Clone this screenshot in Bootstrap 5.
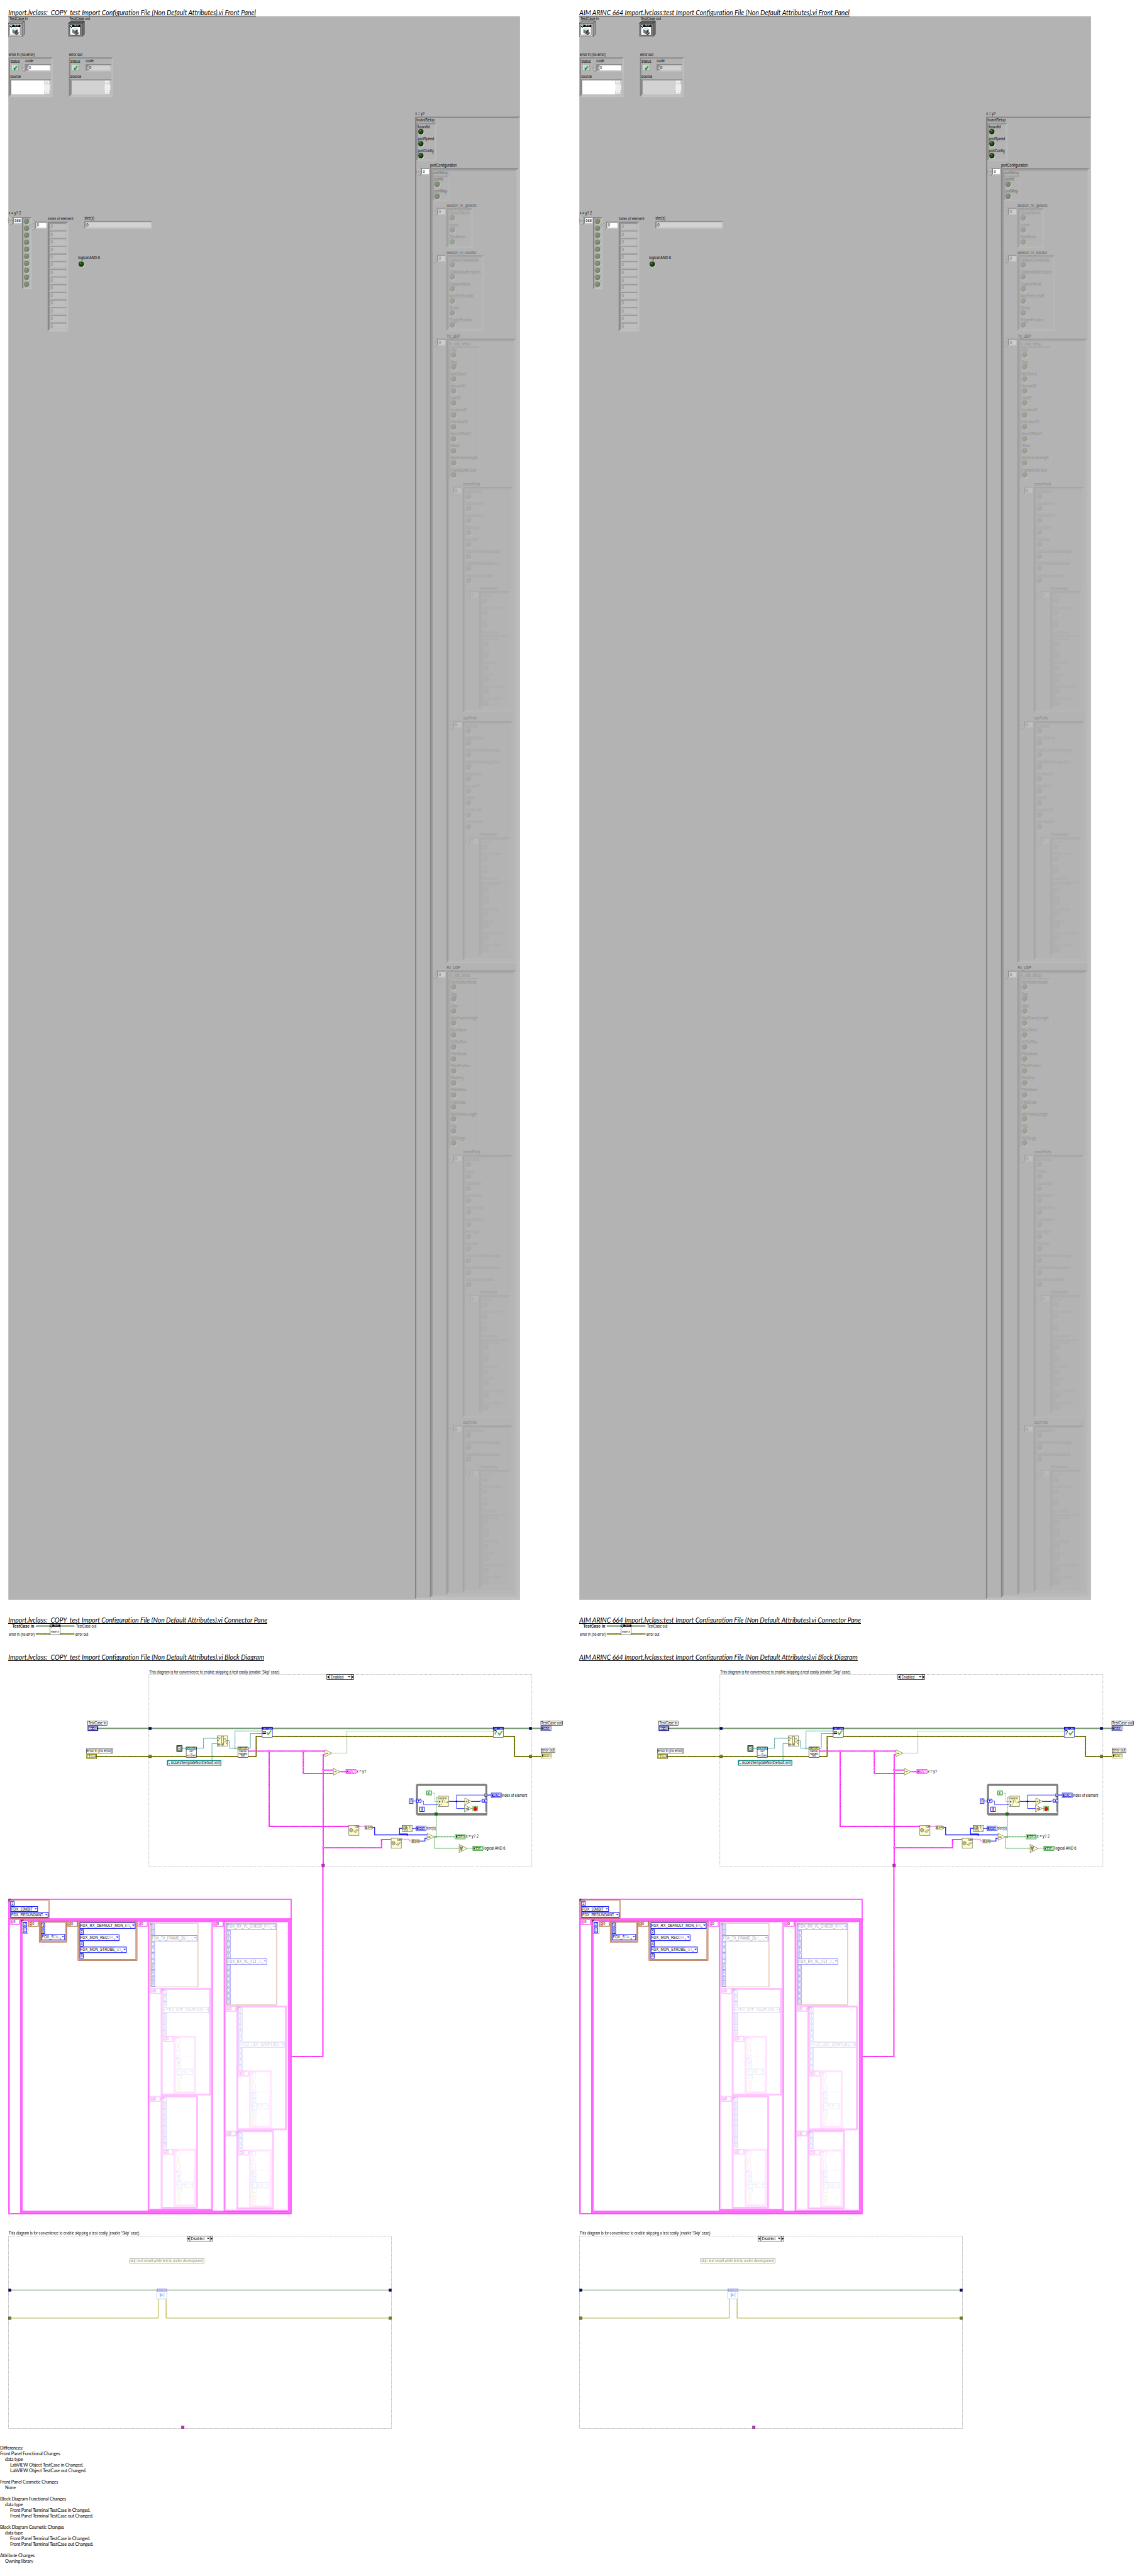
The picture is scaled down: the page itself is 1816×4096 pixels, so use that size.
<!DOCTYPE html>
<html lang="en">
<head>
<meta charset="utf-8">
<title>VI comparison report</title>
<link href="https://cdn.jsdelivr.net/npm/bootstrap@5.3.0/dist/css/bootstrap.min.css" rel="stylesheet">
<style>
body{background:#fff;color:#000;width:1816px;overflow-x:hidden}
.vi-title{margin:0;padding-left:13.3px;display:flex;align-items:flex-end;font:italic 400 10.5px/11px Lato,"Open Sans",sans-serif;white-space:pre}
.vi-title span{border-bottom:1.3px solid #000;height:11px;line-height:10px;display:block;overflow:visible}
.t-front{height:25.6px;margin-bottom:.4px}
.t-conn{height:38.3px;margin-bottom:.4px}
.t-diag{height:27.7px;margin-bottom:.4px}
.canvas{display:block;width:908px;overflow:visible}
.canvas text{font-family:"Liberation Sans",Arial,sans-serif;font-size:13.4px;white-space:pre}
.diffs{font:400 7.4px/9.01px Lato,"Open Sans",sans-serif;letter-spacing:-.23px;padding-top:18.4px}
.diffs ul{list-style:none;margin:0;padding:0}
.diffs li ul{padding-left:8px}
.diffs .grp{margin-bottom:9.01px}
</style>
</head>
<body>
<main class="container-fluid p-0">
 <div class="row g-0">
  <section class="col-6" data-vi="Import.lvclass:  COPY  test Import Configuration File (Non Default Attributes).vi" data-w="741,775.5,766"></section>
  <section class="col-6" data-vi="AIM ARINC 664 Import.lvclass:test Import Configuration File (Non Default Attributes).vi" data-w="808.5,843,833"></section>
 </div>
 <div class="diffs">
  <div>Differences:</div>
  <ul>
   <li class="grp">Front Panel Functional Changes<ul><li>data type<ul><li>LabVIEW Object TestCase in Changed.</li><li>LabVIEW Object TestCase out Changed.</li></ul></li></ul></li>
   <li class="grp">Front Panel Cosmetic Changes<ul><li>None</li></ul></li>
   <li class="grp">Block Diagram Functional Changes<ul><li>data type<ul><li>Front Panel Terminal TestCase in Changed.</li><li>Front Panel Terminal TestCase out Changed.</li></ul></li></ul></li>
   <li class="grp">Block Diagram Cosmetic Changes<ul><li>data type<ul><li>Front Panel Terminal TestCase in Changed.</li><li>Front Panel Terminal TestCase out Changed.</li></ul></li></ul></li>
   <li>Attribute Changes<ul><li>Owning library</li></ul></li>
  </ul>
 </div>
</main>
<script src="https://cdn.jsdelivr.net/npm/bootstrap@5.3.0/dist/js/bootstrap.bundle.min.js"></script>
<script>
const K = 908 / 1713;
let out = '';
const esc = s => s.replace(/&/g, '&amp;').replace(/</g, '&lt;');
const add = s => { out += s; };
const R = (x1, y1, x2, y2, fill, stroke, sw, extra) => add(`<rect x="${x1}" y="${y1}" width="${x2 - x1}" height="${y2 - y1}" fill="${fill || 'none'}"${stroke ? ` stroke="${stroke}" stroke-width="${sw || 1}"` : ''} ${extra || ''}/>`);
// framed rectangle whose stroke stays inside its bounds
const F = (x1, y1, x2, y2, fill, stroke, sw, extra) => R(x1 + sw / 2, y1 + sw / 2, x2 - sw / 2, y2 - sw / 2, fill, stroke, sw, extra);
const T = (x, y, s, w, extra) => add(`<text x="${x}" y="${y}"${w ? ` textLength="${w}" lengthAdjust="spacingAndGlyphs"` : ''} ${extra || ''}>${esc(s)}</text>`);
const P = (pts, fill, stroke, sw, extra) => add(`<polygon points="${pts}" fill="${fill || 'none'}"${stroke ? ` stroke="${stroke}" stroke-width="${sw || 1}"` : ''} ${extra || ''}/>`);
const L = (pts, stroke, sw, extra) => add(`<polyline points="${pts}" fill="none" stroke="${stroke}" stroke-width="${sw}" ${extra || ''}/>`);
const svg = (y, h) => { const r = `<svg class="canvas" viewBox="0 ${y} 1713 ${h}" style="height:${(h * K).toFixed(2)}px">${out}</svg>`; out = ''; return r; };

/* ---------- front panel parts ---------- */
const OP = [1, .45, .2, .085, .045];
function bevel(x1, y1, x2, y2, op, fill, b) {
  b = b || 4; op = op === undefined ? 1 : op;
  if (fill) R(x1, y1, x2, y2, fill);
  add(`<g opacity="${op}">`);
  P(`${x1},${y1} ${x2},${y1} ${x2 - b},${y1 + b} ${x1 + b},${y1 + b}`, '#8a8a8a');
  P(`${x1},${y1} ${x1 + b},${y1 + b} ${x1 + b},${y2 - b} ${x1},${y2}`, '#868686');
  P(`${x1},${y2} ${x1 + b},${y2 - b} ${x2 - b},${y2 - b} ${x2},${y2}`, '#c1c1c1');
  P(`${x2},${y1} ${x2},${y2} ${x2 - b},${y2 - b} ${x2 - b},${y1 + b}`, '#bfbfbf');
  add('</g>');
}
function led(cx, cy, lv) {
  const c = ['#23500f', '#7c8c70', '#9aa294', '#a8aca5', '#aeb0ac'][lv], d = ['#0d2a02', '#71836a', '#959c90', '#a5a9a3', '#acaeab'][lv];
  const o = [1, .7, .4, .18, .08][lv];
  add(`<circle cx="${cx + 1.3}" cy="${cy + 1.3}" r="8.4" fill="#f4f4f4" opacity="${o * .75}"/><circle cx="${cx - .7}" cy="${cy - .7}" r="8.8" fill="#8f8f8f" opacity="${o * .7}"/><circle cx="${cx}" cy="${cy}" r="7.7" fill="${d}"/><circle cx="${cx - 1}" cy="${cy - 1.2}" r="5.8" fill="${c}"/><circle cx="${cx - 2.5}" cy="${cy - 3}" r="1.6" fill="#c8d8b8" opacity="${o * .6}"/>`);
}
function spin(cx, cy, op, rx, ry) {
  rx = rx || 6.8; ry = ry || 13.6;
  add(`<g opacity="${op}"><ellipse cx="${cx + .6}" cy="${cy + .6}" rx="${rx}" ry="${ry}" fill="#606060"/><ellipse cx="${cx}" cy="${cy}" rx="${rx}" ry="${ry}" fill="#c6c6c6" stroke="#8a8a8a"/><path d="M${cx - rx} ${cy}H${cx + rx}" stroke="#777"/><path d="M${cx - 2.6} ${cy - 3.5}L${cx} ${cy - 9}L${cx + 2.6} ${cy - 3.5}ZM${cx - 2.6} ${cy + 3.5}L${cx} ${cy + 9}L${cx + 2.6} ${cy + 3.5}Z" fill="#e8e8e8" stroke="#666" stroke-width=".9"/></g>`);
}
function arrIndex(cx, cy, lv) {
  spin(cx, cy, [1, .62, .3, .14][lv]);
  bevel(cx + 6, cy - 10.5, cx + 34, cy + 11, [1, .6, .3, .15][lv], null, 3.5);
  R(cx + 9.5, cy - 7, cx + 30, cy + 8, ['#fff', '#cecece', '#bfbfbf', '#b9b9b9'][lv]);
  T(cx + 12, cy + 5, '0', 6, `opacity="${[1, .5, .3, .16][lv]}"`);
}
function items(x, base, list, lv) {
  list.forEach((it, i) => { T(x, base + 36 * i, it[0], it[1], `opacity="${OP[lv]}"`); led(x + 9.3, base + 11 + 36 * i, lv); });
}
const D = { name: 26, 'default value': 60, unit: 16, partitionID: 48, UdpSrcPort: 54, UdpDstPort: 54, PortType: 42, SubVlId: 37, UdpNumBufMessages: 105, UdpMaxMessageSize: 102, UdpSamplingRate: 85, domainID: 45, sideID: 30, locationID: 48, interfaceID: 52 };
const N = s => s.split(',').map(n => [n, D[n]]);
function parameters(b) {
  T(1438.5, b, 'Parameters', 52, `opacity="${OP[3] + .03}"`);
  arrIndex(1403.5, b + 14, 3);
  bevel(1438, b + 4, 1531, b + 359, .18); bevel(1442, b + 8, 1527, b + 355, .08);
  items(1446, b + 22.5, N('name,default value,unit'), 4);
  T(1446.5, b + 132, 'Parameter', 48, `opacity="${OP[4]}"`);
  bevel(1446, b + 137, 1523, b + 353, .1);
  items(1450, b + 151, [['start index', 47], ['size', 18], ['encoding', 43], ['signed', 30], ['scale multiplier', 68], ['scale offset', 53]], 4);
}
function ports(title, w, b, list, bottom) {
  T(1389, b, title, w, 'opacity=".26"');
  arrIndex(1354, b + 14, 2);
  bevel(1388, b + 4, 1539, bottom, .33); bevel(1392, b + 8, 1535, bottom - 4, .14);
  items(1397, b + 23, list, 3);
  parameters(b + 23 + 11 + 36 * (list.length - 1) + 27);
}
function objIcon(x, dark) {
  P(`${x},70 ${x + 8},62.5 ${x + 48},62.5 ${x + 41},70`, dark ? '#5c5c5c' : '#a2a2a2', '#111', 1);
  P(`${x + 41},70 ${x + 48},62.5 ${x + 48},103 ${x + 41},109.5`, dark ? '#6c6c6c' : '#9c9c9c', '#111', 1);
  F(x, 70, x + 41, 109.5, dark ? '#8c8c8c' : '#ececec', '#444', 1);
  F(x + 4, 74, x + 36, 106, '#fff', '#000', 1);
  R(x + 4, 74, x + 36, 81, '#000');
  T(x + 16, 80, 'TEST', 17, 'style="font-size:7px" fill="#fff"');
  R(x + 5, 75, x + 12, 77, '#bff'); R(x + 7.5, 77, x + 10, 81, '#bff'); R(x + 8, 81, x + 10, 84, '#00a');
  P(`${x + 20},104 ${x + 30},97 ${x + 33},98 ${x + 26},104`, '#333');
  P(`${x + 12},88 ${x + 20},92 ${x + 20},103 ${x + 12},98`, '#777');
  P(`${x + 28},88 ${x + 20},92 ${x + 20},103 ${x + 28},98`, '#444');
  P(`${x + 12},88 ${x + 20},84 ${x + 28},88 ${x + 20},92`, '#bff', '#688', .6);
}
function errCluster(x, ind) {
  bevel(x, 172, x + 132, 291, 1);
  T(x + 5, 188.5, 'status', 28.5); T(x + 50, 187.5, 'code', 24);
  R(x + 10, 194, x + 29.5, 212.5, '#8a8a8a'); R(x + 10, 194, x + 28, 211.3, '#e6e6e6'); R(x + 12, 196, x + 27.5, 211, '#cfcfcf');
  L(`${x + 15.5},204 ${x + 18},208 ${x + 24.5},198.5`, '#063', 3.6); L(`${x + 15.5},204 ${x + 18},207.5 ${x + 24.5},198.5`, '#0f2', 1.8);
  bevel(x + 50, 192.5, x + 128, 214.5, 1, null, 3.5);
  R(x + 53, 195.5, x + 60, 211, '#8e8e8e'); R(x + 60, 195.5, x + 124, 211, ind ? '#d2d2d2' : '#fff');
  T(x + 54.5, 207, 'd', 5, 'fill="#fff" style="font-size:9px"'); T(x + 61, 208, '0', 6.2);
  if (!ind) spin(x + 45, 203, 1, 5.5, 11.5);
  T(x + 4.5, 233, 'source', 32);
  bevel(x + 4, 238, x + 128, 286.5, 1, null, 3.5);
  R(x + 8, 241, x + 124, 283, ind ? '#d2d2d2' : '#fff');
  R(x + 107, 241, x + 123.5, 283, '#efefef');
  [[242, 'M-2 1.5L0-1.5L2 1.5Z'], [272, 'M-2-1.5L0 1.5L2-1.5Z']].forEach(([y, d]) => {
    R(x + 107, y, x + 123.5, y + 10, '#777'); R(x + 107, y, x + 122.5, y + 9, '#f4f4f4');
    add(`<path transform="translate(${x + 115} ${y + 5})" d="${d}" fill="#888"/>`);
  });
}
function frontPanel() {
  R(25, 49, 1560, 4799, '#b3b3b3');
  T(28, 61, 'TestCase in', 55.5); T(208.5, 61, 'TestCase out', 61.5);
  objIcon(25, false); objIcon(205, true);
  T(26.5, 168, 'error in (no error)', 77.5); T(207.5, 168, 'error out', 39);
  errCluster(26, false); errCluster(207, true);
  // boolean array
  T(25.5, 643, 'x = y? 2', 37.5);
  spin(31.5, 661, 1); bevel(38, 651, 67, 673, 1, null, 3.5); R(42, 654, 64, 669, '#fff'); T(44, 666, '688', 18);
  bevel(66, 651, 95, 868, 1);
  for (let i = 0; i < 10; i++) led(80, 664.3 + 21 * i, 1);
  // index array
  T(143.5, 660, 'index of element', 76.5, 'fill="#101030"');
  spin(99, 675, 1); bevel(105, 665, 143, 687, 1, null, 3.5); R(109, 668, 139, 683, '#fff'); T(111, 680, '0', 6.3);
  bevel(143, 665, 205, 994, 1);
  for (let i = 0; i < 14; i++) { const y = 668.5 + 23 * i; bevel(147, y, 201, y + 22.5, .65, null, 3.5); R(151, y + 3.5, 197, y + 18.8, '#bfbfbf'); T(153, y + 15.3, '0', 6.2, 'fill="#808080"'); }
  T(253.5, 659, 'size(s)', 29.5); bevel(253, 663, 457, 686, 1, null, 3.5); R(257, 666.5, 453, 682.5, '#d2d2d2'); T(259, 679, '0', 6.3);
  T(234.5, 778, 'logical AND 6', 65.5); led(244, 792.3, 0);
  // comparison result cluster
  T(1245.5, 344.5, 'x = y?', 28);
  bevel(1245, 350, 1560, 4797, 1);
  T(1249.5, 365, 'boardSetup', 54.5); bevel(1249, 369, 1309, 482, .8);
  items(1253.5, 384, [['boardId', 36], ['portSpeed', 48.5], ['portConfig', 47.5]], 0);
  T(1290.5, 500, 'portConfiguration', 80); arrIndex(1256.5, 514, 0);
  bevel(1290, 504, 1556, 4793, 1); bevel(1294, 508, 1552, 4789, .5);
  T(1298.5, 523, 'portSetup', 46, 'opacity=".42"'); bevel(1298, 527, 1348, 603, .4);
  items(1302.5, 542, [['portId', 27], ['portMap', 39]], 1);
  T(1339.5, 620.5, 'session_tx_generic', 90, 'opacity=".5"'); arrIndex(1305, 634, 1);
  bevel(1339, 624, 1419, 744, .45); bevel(1343, 628, 1415, 740, .2);
  items(1348, 643, [['QueueSizeIn', 60.5], ['count', 27], ['StartMode', 48]], 2);
  T(1339.5, 761.5, 'session_rx_monitor', 89.5, 'opacity=".5"'); arrIndex(1305, 775, 1);
  bevel(1339, 765, 1452, 993, .45); bevel(1343, 769, 1448, 989, .2);
  items(1348, 784, [['DefaultCronoMode', 88], ['GlbMonBufferSizeIn', 94], ['CaptureMode', 64], ['MaxFileSizeMB', 71], ['Strobe', 30], ['TriggerPosition', 69]], 2);
  T(1340, 1012.5, 'Tx_UDP', 40, 'opacity=".5"'); arrIndex(1305, 1026.5, 1);
  bevel(1339, 1016, 1548, 2889, .5); bevel(1343, 1020, 1544, 2885, .22);
  T(1347.5, 1035, 'tx_udp_setup', 63.5, 'opacity=".2"'); bevel(1347, 1039, 1440, 1438, .2);
  items(1352, 1054, [['VlId', 17], ['Bag', 18], ['NetSelect', 46], ['domainID', 45], ['sideID', 30], ['locationID', 48], ['interfaceID', 52], ['NumOfSubVl', 60], ['Skew', 26], ['MaxFrameLength', 81], ['FrameBufferSize', 76]], 2);
  ports('commPorts', 51.5, 1456, N('partitionID,UdpSrcPort,UdpDstPort,PortType,SubVlId,UdpNumBufMessages,UdpMaxMessageSize,UdpSamplingRate'), 2137);
  ports('sapPorts', 41, 2159, N('SubVlId,UdpSrcPort,UdpNumBufMessages,UdpMaxMessageSize,partitionID,domainID,sideID,locationID,interfaceID'), 2880);
  T(1340, 2908, 'Rx_UDP', 41, 'opacity=".5"'); arrIndex(1305, 2922, 1);
  bevel(1339, 2911, 1548, 4785, .5); bevel(1343, 2915, 1544, 4781, .22);
  T(1347.5, 2930, 'rx_udp_setup', 63.5, 'opacity=".2"'); bevel(1347, 2934, 1440, 3442, .2);
  items(1352, 2950, [['VerificationMode', 78], ['Bag', 18], ['Jitter', 22], ['MaxFrameLength', 81], ['MaxSkew', 46], ['VLBufSize', 48], ['FilterMode', 48], ['FilterPosition', 58], ['Padding', 38], ['FilterMask', 47], ['FilterData', 44], ['MinFrameLength', 78], ['VlId', 17], ['VLRange', 44]], 2);
  ports('commPorts', 51.5, 3460, N('domainID,sideID,locationID,partitionID,UdpSrcPort,UdpDstPort,PortType,SubVlId,UdpNumBufMessages,UdpMaxMessageSize,UdpSamplingRate'), 4253);
  ports('sapPorts', 41, 4272, N('UdpDstPort,UdpNumBufMessages,UdpMaxMessageSize'), 4776);
  return svg(49, 4750);
}

/* ---------- wires ---------- */
const wGreen = (p, o) => { L(p, '#567f56', 4, o); L(p, '#a3b89b', 1.2, o); };
const wErr = (p, o) => { L(p, '#8a8a00', 3.4, o); L(p, '#111100', 1.3, 'stroke-dasharray="2 1.6" ' + (o || '')); };
const wPink = p => { L(p, '#ff00f5', 3.4); L(p, '#fff', 1, 'stroke-dasharray="2.2 2.2"'); };
const wPinkThin = p => L(p, '#ff00f5', 1.6, 'stroke-dasharray="3 .8"');
const wTeal = p => L(p, '#0b8585', 1.6, 'stroke-dasharray="2.6 .6"');
const wBool = (p, w) => L(p, '#008000', w || 1.3, 'stroke-dasharray="1.4 1"');
const wBlue = (p, w) => L(p, '#0000ff', w || 1.4);

function connector() {
  wGreen('107,4878.5 223,4878.5'); wErr('107,4902.5 223,4902.5');
  F(149, 4874, 181, 4906, '#fff', '#000', 1); R(149, 4874, 181, 4881, '#000');
  T(161, 4880.3, 'TEST', 17, 'style="font-size:7px" fill="#fff"');
  R(150, 4875, 157, 4877, '#bff'); R(152.5, 4877, 155, 4881, '#bff'); R(153, 4881, 155, 4884, '#00a');
  T(152, 4899, 'EXAMPLE', 25, 'style="font-size:7px"');
  T(36.5, 4883, 'TestCase in', 66, 'font-weight="bold"'); T(228, 4883, 'TestCase out', 61);
  T(26.5, 4907, 'error in (no error)', 77.5); T(226, 4907, 'error out', 38.5);
  return svg(4872, 58);
}

/* ---------- block diagram parts ---------- */
const CREAM = '#ffffcc', OL = '#4a4a3a';
function tri(x, y, w, h, s, sw) { P(`${x},${y} ${x + w},${y + h / 2} ${x},${y + h}`, CREAM, OL, 1.1); if (s) T(x + 2.5, y + h / 2 + 3.8, s, sw || 8, 'style="font-size:11px" font-weight="bold" fill="#333"'); }
function tunnel(x, y, c) { F(x, y, x + 9, y + 9, c, '#3a3a3a', 1); }
function term(x, y, c, s, ctl) {
  F(x, y, x + 31.5, y + 15, '#fff', c, ctl ? 2 : 1.2);
  F(x + 3, y + 3, x + 28.5, y + 12, '#fff', c, 1.2);
  if (s) T(x + 8, y + 10.8, s, 17, `style="font-size:9px" font-weight="bold" fill="${c}"`);
  else { F(x + 8, y + 5, x + 12, y + 7.5, 'none', c, .9); F(x + 16, y + 5, x + 18, y + 7, c, c, .5); R(x + 13, y + 7.5, x + 16, y + 10.5, c); R(x + 9, y + 9, x + 11, y + 11, c); F(x + 19, y + 7, x + 23, y + 10.8, 'none', c, .9); }
  if (ctl) { R(x + 22, y + 2, x + 29.5, y + 13, '#b4b4e0', null, 0, 'opacity=".6"'); P(`${x + 27.5},${y + 4.5} ${x + 31},${y + 7.5} ${x + 27.5},${y + 10.5}`, '#000'); }
  else { R(x + 2, y + 2, x + 8.5, y + 13, c, null, 0, 'opacity=".3"'); P(`${x + 3.5},${y + 4.5} ${x + 7},${y + 7.5} ${x + 3.5},${y + 10.5}`, '#000'); }
}
function label(x1, y1, x2, y2, s) { F(x1, y1, x2, y2, '#fff', '#000', 1.1); T(x1 + 1.5, y2 - 3.2, s, x2 - x1 - 4); }
function subvi(x, y, head, hc, tc, lines, bc) {
  F(x, y, x + 31.7, y + 31.7, '#fff', bc || '#000', 1.1); F(x, y, x + 31.7, y + 8.3, hc, bc || '#000', 1.1);
  T(x + 2.5, y + 7, head, 27, `style="font-size:7.5px" fill="${tc}"`);
  lines.forEach((l, i) => T(x + 16 - l[1] / 2, y + 15.6 + 7 * i, l[0], l[1], 'style="font-size:7.5px"'));
}
const check = (x, y) => { L(`${x},${y} ${x + 4},${y + 6.5} ${x + 13},${y - 5}`, '#2f9a2f', 3.6); L(`${x},${y} ${x + 4},${y + 5.8} ${x + 13},${y - 5}`, '#7ee05a', 1.7); };
function selector(x1, y, x2, s, w) {
  F(x1, y, x2, y + 16, '#fff', '#000', 1.2); L(`${x1 + 8.5},${y} ${x1 + 8.5},${y + 16}`, '#000', 1.2); L(`${x2 - 8.5},${y} ${x2 - 8.5},${y + 16}`, '#000', 1.2);
  P(`${x1 + 1.5},${y + 8} ${x1 + 6.5},${y + 4} ${x1 + 6.5},${y + 12}`, '#000'); P(`${x2 - 1.5},${y + 8} ${x2 - 6.5},${y + 4} ${x2 - 6.5},${y + 12}`, '#000');
  P(`${x2 - 18.5},${y + 5.5} ${x2 - 10.5},${y + 5.5} ${x2 - 14.5},${y + 9.5}`, '#000');
  T(x1 + 12, y + 12, s, w);
}
function flatten(x, y) {
  F(x, y, x + 31.5, y + 31, CREAM, OL, 1.1);
  P(`${x + 2.5},${y + 12} ${x + 7},${y + 9.5} ${x + 12},${y + 12} ${x + 12},${y + 18} ${x + 7},${y + 21} ${x + 2.5},${y + 18}`, '#bdbd98', OL, 1);
  P(`${x + 15},${y + 20} ${x + 20},${y + 15} ${x + 29},${y + 13} ${x + 25},${y + 18} ${x + 22},${y + 22}`, '#dcdcb0', OL, .9);
  F(x + 19, y + 2.5, x + 30, y + 7, '#fff', OL, 1); R(x + 24, y + 3, x + 29, y + 6.5, '#77775f');
}
function conv(x, y) { P(`${x},${y} ${x + 22},${y} ${x + 24},${y + 2} ${x + 24},${y + 8} ${x + 22},${y + 10} ${x},${y + 10} ${x + 2},${y + 5}`, CREAM, OL, 1.1); R(x + 1, y + .8, x + 8, y + 9.3, '#8c8c70'); T(x + 9.5, y + 8, '[U8]', 13, 'style="font-size:8px" font-weight="bold" fill="#333"'); }
const dot = (x, y) => add(`<circle cx="${x}" cy="${y}" r="3" fill="#ff9cff" stroke="#ff00f5"/>`);

function mainDiagram() {
  T(447.5, 5020, "This diagram is for convenience to enable skipping a test easily (enable 'Skip' case)", 391);
  R(446.5, 5023.5, 1595.5, 5600, 'none', '#8a8a8a', 1.1, 'stroke-dasharray="2 1.7"');
  selector(980, 5023.2, 1062, 'Enabled', 39);
  // class and error wires
  wGreen('294,5185.4 1622,5185.4'); wErr('290,5269.4 558,5269.4'); wErr('589,5269.4 713,5269.4');
  wErr('744,5269.4 768.5,5269.4 768.5,5209.5 1479,5209.5'); wErr('1511,5209.5 1543.5,5209.5 1543.5,5269.4 1623,5269.4');
  // path wires
  L('547,5245.4 558,5245.4', '#008080', 1.3);
  wTeal('589,5245 610.5,5245 610.5,5215 651,5215'); wTeal('636,5281 636,5231 651,5231');
  wTeal('683,5222.5 689,5222.5 689,5245 713,5245'); wTeal('705,5245 705,5193 786,5193'); wTeal('744,5245 751,5245 751,5201 786,5201');
  P('705,5242 707.5,5245 705,5248 702.5,5245', '#fff', '#008080', 1);
  // cluster wires
  wPink('744,5253.5 975,5253.5'); wPink('807.5,5253.5 807.5,5479.3 1046,5479.3'); wPink('910,5253.5 910,5320.5 1000,5320.5');
  wPink('975,5264.5 969.5,5264.5 969.5,5596'); wPink('969.5,5310.5 1000,5310.5'); wPink('969.5,5543.5 1144.5,5543.5 1144.5,5518.5 1173,5518.5');
  wPink('1021,5315.5 1037,5315.5'); wPink('969.5,5600 968.7,5604 968.7,6169.5 875,6169.5');
  [[807.5, 5253.5], [910, 5253.5], [969.5, 5310.5], [969.5, 5543.5]].forEach(p => dot(p[0], p[1]));
  // boolean and integer wires
  wBool('996,5259.5 1040.7,5259.5 1040.7,5193.5 1479,5193.5');
  wPinkThin('1077,5479.5 1094,5479.5'); wPinkThin('1204,5517.5 1228,5517.5 1228,5523 1236,5523');
  wBlue('1118,5482 1124,5482 1124,5504.8 1281,5504.8', 2.2); wBlue('1222,5504.8 1222,5502 1198.5,5502 1198.5,5485.2 1206,5485.2', 2.2);
  wBlue('1259,5523.3 1275,5523.3 1275,5514.8 1281,5514.8', 2.2); wBlue('1237,5485.5 1247,5485.5', 1.5);
  add('<circle cx="1222" cy="5504.8" r="2.4" fill="#00f"/>');
  // terminals
  label(263, 5162.3, 321.7, 5176.5, 'TestCase in'); term(263, 5177.8, '#000080', 'OBJ', true);
  label(259, 5246.3, 338.7, 5260.5, 'error in (no error)'); term(259, 5261.8, '#808000', null, true);
  label(1622, 5162.3, 1688, 5176.5, 'TestCase out'); term(1622, 5177.6, '#000080', 'OBJ');
  label(1623, 5244.3, 1665, 5258.7, 'error out'); term(1623, 5259.6, '#808000');
  tunnel(446, 5181, '#000080'); tunnel(446, 5265, '#808000'); tunnel(1587, 5181, '#000080'); tunnel(1587, 5265, '#808000'); tunnel(965, 5592, '#ff00ff');
  // this-VI constant
  F(529.5, 5236.3, 547, 5255, '#ccffcc', '#000', 2.4); P('533.5,5240 540,5240 543,5243 543,5251.5 533.5,5251.5', '#eaffea', '#000', 1); T(535, 5249.5, 'VI', 6.5, 'style="font-size:6.5px"');
  subvi(558, 5241, 'VS UTIL', '#99ffff', '#000', [['GET', 13], ['VI', 6], ['FOLDER', 27]]);
  subvi(713, 5241, 'IMPORT', '#ffff99', '#000', [['PARSE', 23], ['PARAM', 25], ['XML', 14]]);
  subvi(786, 5181, 'TEST CASE', '#0000c8', '#fff', [], '#0000c8');
  R(788, 5194.8, 798, 5197, '#000'); R(788, 5199.8, 798, 5202, '#000'); P('786,5190.5 789,5193 786,5195.5', '#f00'); P('786,5198.5 789,5201 786,5203.5', '#f00'); check(800.5, 5197);
  subvi(1479, 5181, 'TEST CASE', '#0000c8', '#fff', [], '#0000c8');
  T(1480.5, 5206, '?', 10, 'style="font-size:19px"'); check(1494, 5198);
  // build path
  F(651, 5207, 683, 5238.7, CREAM, OL, 1.1); F(664.5, 5209, 671, 5233, 'none', OL, 1.1);
  F(652.7, 5211.5, 656, 5214.5, 'none', OL, .9); F(656, 5215.5, 659, 5218.5, 'none', OL, .9); F(652.7, 5220, 656, 5223, 'none', OL, .9);
  R(653, 5230.5, 659.5, 5237, '#8c8c70'); R(664.5, 5230.5, 671, 5237, '#8c8c70'); L('659,5214.5 664,5214.5', OL, 1.2); L('660,5233.7 664,5233.7', OL, 1.2);
  F(674, 5216, 677, 5219, 'none', OL, .9); F(678.5, 5220.5, 681.5, 5223.5, 'none', OL, .9); F(674, 5224, 677, 5227, 'none', OL, .9); R(678.5, 5228, 681.5, 5231, OL);
  F(501, 5280.6, 664, 5297, '#fff', '#008080', 2.6); F(504, 5284, 507, 5287, 'none', '#008080', .9); F(506, 5289, 509.5, 5292.5, 'none', '#008080', .9); T(512, 5293.2, 'Assets\\templateNonDefault.xml', 147.5);
  tri(975, 5249.3, 21, 20.7, '=', 8); tri(1000, 5305, 21, 20.7, '=', 8);
  term(1037, 5307.6, '#ff00ff'); T(1069.5, 5319, 'x = y?', 28.5);
  // while loop
  add('<path d="M1251 5355H1459V5443H1251Z" fill="none" stroke="#808080" stroke-width="6" stroke-linejoin="bevel"/>');
  R(1454, 5435.5, 1459, 5439, '#fff'); L('1251,5443 1462,5443', '#808080', 6);
  wBool('1295,5379.5 1304.5,5379.5 1304.5,5404.3 1314,5404.3', 1.1); wBool('1314,5392.7 1308.5,5392.7 1308.5,5510.5', 2);
  wBlue('1240,5403.3 1249,5403.3'); wBlue('1263,5403.3 1270.5,5403.3 1270.5,5414.3 1314,5414.3', 1.1);
  wBlue('1346,5404.3 1394,5404.3', 1.8); wBlue('1369.5,5425.5 1369.5,5385.3 1453,5385.3', 1.5); wBlue('1369.5,5425.5 1394,5425.5', 1.5); wBlue('1415,5404.3 1440,5404.3 1440,5403.3 1447,5403.3', 1.8);
  add('<circle cx="1369.5" cy="5404.3" r="2.6" fill="#00f"/>'); wBool('1414,5425.5 1418,5425.5');
  wBlue('1461,5385.2 1473,5385.2', 2.4);
  F(1279.5, 5372.3, 1295, 5385.7, '#fff', '#008000', 1.8); T(1284, 5382.7, 'F', 6.5, 'style="font-size:9.5px" font-weight="bold" fill="#008000"');
  F(1227, 5395.5, 1240, 5411.6, '#fff', '#0000ff', 1.8); T(1230.5, 5408, '0', 6.2);
  F(1248.5, 5397, 1263.7, 5408.5, '#fff', '#0000d0', 1.8); P('1252,5400.5 1260,5400.5 1256,5405.5', '#0000ff');
  F(1446, 5397, 1461.5, 5408.5, '#fff', '#0000d0', 1.8); P('1449.7,5405 1457.7,5405 1453.7,5400', '#0000ff');
  F(1258.5, 5420.3, 1273.7, 5435.6, CREAM, '#0000ff', 1.8); T(1263.6, 5432.8, 'i', 5, 'font-weight="bold" fill="#00f"');
  F(1314, 5388, 1346, 5420, CREAM, OL, 1.1); F(1316, 5393.5, 1341, 5398, 'none', OL, 1.1); L('1321,5394 1321,5398', OL, 1); L('1326,5394 1326,5398', OL, 1); L('1331,5394 1331,5398', OL, 1); L('1336,5394 1336,5398', OL, 1);
  add(`<circle cx="1327.5" cy="5399" r="2.8" fill="${CREAM}" stroke="${OL}"/>`); L('1327.5,5402 1326,5410', OL, 1.5); R(1317, 5403, 1321, 5407.5, OL); R(1317, 5413.5, 1321, 5416.5, OL); R(1340, 5405, 1344, 5408, OL); L('1334,5400 1334,5406.5 1339,5406.5', OL, .9); L('1324,5416 1325,5412', OL, 1);
  tri(1394.5, 5394, 20.5, 20.7, '+1', 11); tri(1393.5, 5415.3, 20.5, 20.7, '<0', 11);
  F(1418, 5418.4, 1433.7, 5434, '#ffffcc', '#008000', 1.1); P('1423.5,5420.5 1428,5420.5 1430.5,5424 1430.5,5428.5 1428,5432 1423.5,5432 1421,5428.5 1421,5424', '#f00', '#300', .8);
  F(1453, 5381, 1461.6, 5389.7, '#fff', '#3a3a20', 1.2); T(1454.8, 5388, '[]', 5, 'style="font-size:7.5px" font-weight="bold" fill="#00d"');
  term(1473, 5378.5, '#0000dd', '[I32]'); T(1505.7, 5390, 'index of element', 76);
  tunnel(1304, 5437.3, '#008000');
  // flatten and compare
  flatten(1046, 5475.5); flatten(1173, 5514.5); conv(1094, 5477.5); conv(1235, 5518.5);
  F(1206, 5475.5, 1237.6, 5495.7, CREAM, OL, 1.1); F(1212, 5480.5, 1224, 5493, CREAM, OL, 1); F(1208, 5477.5, 1220.5, 5489.5, CREAM, OL, 1); L('1212,5478 1212,5489', OL, 1); L('1216,5478 1216,5489', OL, 1); L('1208,5481.5 1220,5481.5', OL, 1); L('1208,5485.5 1220,5485.5', OL, 1); L('1229,5478 1229,5486 1235,5492', OL, 1.1); L('1227,5480 1229,5478 1236,5486', OL, .9);
  term(1247, 5477.6, '#0000dd', 'I32'); T(1279, 5489, 'size(s)', 28.5);
  wBool('1303,5510.5 1365,5510.5', 2); wBool('1304,5510.5 1304,5545.3 1377,5545.3', 2); wBool('1402,5545.5 1418,5545.5');
  tri(1281.5, 5500.3, 21.5, 20.7, '=', 8);
  add('<circle cx="1308" cy="5510.5" r="2.5" fill="#9fcf9f" stroke="#008000"/>');
  term(1365, 5502.6, '#008000', '[TF]'); T(1397.5, 5514, 'x = y? 2', 38);
  tri(1377.5, 5533.3, 24, 24.5); P('1379.5,5540 1382,5540 1383.3,5543 1384.7,5543 1386,5540 1388.5,5540 1385,5552 1383,5552', '#888868', OL, .8);
  term(1418, 5537.6, '#008000', 'TF'); T(1451, 5549, 'logical AND 6', 65);
}

/* ---------- nested cluster constant ---------- */
const MG = '#ff00ff', BL = '#0000ff', BR = '#993300';
const tx = (x, y, s, w, c) => T(x, y, s, w, `style="font-size:21px" fill="${c || '#000'}"`);
function nb(x, y, s, c) { F(x, y, x + 19, y + 25.5, '#fff', c || BL, 3); if (s) tx(x + 5, y + 19.5, s, s === '1' ? 9 : 9.5); }
const nbs = (x, y, str, c) => [...str].forEach((s, i) => nb(x, y + 27.5 * i, s, c));
function cb(x1, y1, x2, y2, s, w, cut, ring) {
  F(x1, y1, x2, y2, '#fff', BL, 3); P(`${x2 - 16},${y1 + 10} ${x2 - 4},${y1 + 10} ${x2 - 10},${y1 + 16}`, BL);
  const off = ring ? 18 : 4;
  if (ring) { P(`${x1 + 3},${y1 + 13} ${x1 + 8},${y1 + 9} ${x1 + 8},${y1 + 17}`, BL); P(`${x1 + 14},${y1 + 13} ${x1 + 9},${y1 + 9} ${x1 + 9},${y1 + 17}`, BL); }
  tx(x1 + off, y1 + 20, s, w);
  if (cut) { R(x1 + off + w - 22, y1 + 4, x1 + off + w + 2, y2 - 4, '#fff', null, 0, 'opacity=".6"'); L(`${x2 - 30},${y1 + 15} ${x2 - 22},${y1 + 23}`, '#888', 1.6); P(`${x2 - 20},${y1 + 18} ${x2 - 20},${y1 + 25} ${x2 - 27},${y1 + 25}`, '#888'); }
}
function ai(x, y, c) {
  F(x, y, x + 50, y + 28, '#fff', c, 1.4); F(x + 3, y + 3, x + 15, y + 25, '#fff', c, 1.2); F(x + 15, y + 3, x + 47, y + 25, '#fff', c, 1.6);
  P(`${x + 5},${y + 12} ${x + 9},${y + 5} ${x + 13},${y + 12}`, c); P(`${x + 5},${y + 16} ${x + 9},${y + 23} ${x + 13},${y + 16}`, c);
  tx(x + 18, y + 20.5, '0', 9.5);
}
const corner = (x, y) => { P(`${x},${y} ${x + 14},${y} ${x},${y + 14}`, '#444'); };
const g = (o, f) => { add(`<g opacity="${o}">`); f(); add('</g>'); };
function fr(x1, y1, x2, y2, c, n, gap, w) { for (let i = 0; i < n; i++) F(x1 + i * gap, y1 + i * gap, x2 - i * gap, y2 - i * gap, i ? 'none' : '#fff', c, w || 1.6); }
function paramConst(x, y) {
  // x,y: top-left of the index box
  g(.35, () => { ai(x, y, MG); }); g(.18, () => { fr(x + 51, y - 1, x + 160, y + 280, MG, 3, 3.6, 1.8); });
  g(.09, () => {
    corner(x + 59, y + 6); F(x + 65, y + 9, x + 83, y + 37, '#fff', MG, 3); nb(x + 61, y + 41, '0', '#ff8000'); F(x + 65, y + 68, x + 83, y + 97, '#fff', MG, 3);
    F(x + 60, y + 101, x + 148, y + 270, '#fff', MG, 1.6); corner(x + 62, y + 103);
    nb(x + 66, y + 105, '0'); nb(x + 66, y + 132, '0'); cb(x + 65, y + 159, x + 145, y + 187, 'BNR', 36, false, true);
    F(x + 66, y + 189, x + 90, y + 210, '#fff', '#008000', 3); tx(x + 73, y + 205, 'F', 9, '#008000');
    nb(x + 66, y + 214, '0', '#ff8000'); nb(x + 66, y + 241, '0', '#ff8000');
  });
}
function portConst(x, y, bot, right, digits, comboAfter, tail, pY) {
  g(.42, () => { ai(x, y, MG); fr(x + 51, y - 1, right, bot, MG, 3, 3, 1.8); });
  g(.18, () => {
    corner(x + 56, y + 4); nbs(x + 61, y + 8, digits);
    if (comboAfter) { const cy = y + 8 + 27.5 * digits.length; cb(x + 61, cy + 1, x + 282, cy + 29, 'FDX_UDP_SAMPLING', 177, false, true); nbs(x + 61, cy + 31, tail); }
  });
  paramConst(x + 61, pY);
}
function clusterConstant() {
  add('<g transform="translate(0 5680) scale(.625 .6186)">');
  fr(40, 26, 1400, 1557, MG, 2, 4, 1.8); corner(41, 27);
  F(45, 121, 1397, 1553, '#fff', MG, 1.6);
  fr(47, 31, 237, 122, BR, 2, 3, 1.4);
  nb(50, 37, '1'); cb(50, 63, 182, 90, 'FDX_10MBIT', 103); cb(50, 91, 232, 118, 'FDX_REDUNDANT', 153);
  ai(46, 125, MG);
  fr(97, 124, 1396, 1551, MG, 4, 3.2, 1.8); corner(101, 128);
  F(105, 134, 136, 196, '#fff', BR, 1.4); nb(110, 139, '2'); nb(110, 167, '1');
  ai(137, 134, BR); fr(187, 134, 322, 238, BR, 3, 3.2, 1.7);
  nb(197, 143, '3'); nb(197, 171, '6'); cb(197, 198, 312, 228, 'FDX_STA', 78, true);
  ai(323, 134, BR); fr(373, 134, 659, 327, BR, 3, 3.2, 1.7);
  cb(382, 142, 650, 172, 'FDX_RX_DEFAULT_MON_EN', 238, true); nb(382, 174, '2'); cb(382, 200, 573, 231, 'FDX_MON_RECOR', 156, true); nb(382, 232, '4');
  cb(382, 259, 608, 289, 'FDX_MON_STROBE_ST', 196, true); nb(382, 291, '3');
  // transmit array
  ai(660, 134, MG); fr(710, 133, 1022, 1539, MG, 2, 4, 1.8); g(.5, () => F(718, 141, 1014, 1531, '#fff', MG, 1.6));
  g(.42, () => { fr(720, 143, 952, 457, BR, 2, 3, 1.6); corner(721, 144); nbs(725, 149, '00'); cb(725, 203, 947, 233, 'FDX_TX_FRAME_DLY_', 182, true); nbs(725, 235, '11110000'); });
  portConst(721, 460, 981, 1012, '100', true, '0000', 692);
  portConst(721, 983, 1529, 950, '100000000', false, '', 1240);
  // receive array
  ai(1023, 134, MG); fr(1074, 133, 1389, 1543, MG, 2, 4, 1.8); g(.5, () => F(1082, 141, 1379, 1533, '#fff', MG, 1.6));
  g(.42, () => { fr(1084, 143, 1331, 543, BR, 2, 3, 1.6); corner(1085, 144); cb(1088, 147, 1326, 178, 'FDX_RX_VL_CHECK_INV', 205, true); nbs(1088, 179, '11011'); cb(1088, 316, 1282, 346, 'FDX_RX_VL_FLT_D', 162, true); nbs(1088, 347, '0000000'); });
  portConst(1084, 546, 1149, 1376, '111100', true, '0000', 860);
  portConst(1084, 1151, 1532, 1314, '000', false, '', 1243);
  add('</g>');
}
function skipDiagram() {
  T(26, 6704.5, "This diagram is for convenience to enable skipping a test easily (enable 'Skip' case)", 392);
  R(25.5, 6708.5, 1174.5, 7285.7, 'none', '#8f8f8f', 1.1, 'stroke-dasharray="2.6 1"');
  selector(561, 6708, 639, 'Disabled', 40);
  F(389, 6775, 612.5, 6790, '#fffff0', '#8f8f8f', 1.4); T(391, 6786.5, 'skip test result while test is under development', 218, 'fill="#8f8f8f"');
  wGreen('34,6870.5 1167,6870.5', 'opacity=".4"');
  L('34,6954.3 474.7,6954.3 474.7,6897', '#b4b44c', 2.6); L('498.5,6897 498.5,6954.3 1167,6954.3', '#b4b44c', 2.6);
  L('34,6954.3 474.7,6954.3 474.7,6897', '#fff', .9, 'stroke-dasharray="1.6 1.8"'); L('498.5,6897 498.5,6954.3 1167,6954.3', '#fff', .9, 'stroke-dasharray="1.6 1.8"');
  subvi(470, 6866, 'TEST CASE', '#9494e6', '#fff', [], '#9494e6'); P('479,6878 490,6885 479,6892', '#a3cdf5'); L('492,6878 492,6892', '#8ab4e0', 1.6);
  tunnel(25, 6866, '#000080'); tunnel(25, 6950, '#808000'); tunnel(1166, 6866, '#000080'); tunnel(1166, 6950, '#808000'); tunnel(544, 7277, '#ff00ff');
}
function diagram() { mainDiagram(); clusterConstant(); skipDiagram(); return svg(4983, 2317); }

document.querySelectorAll('section[data-vi]').forEach(sec => {
  const w = sec.dataset.w.split(','), h = (cls, s, i) => `<h2 class="vi-title ${cls}"><span data-fit="${w[i]}">${esc(sec.dataset.vi + s)}</span></h2>`;
  sec.innerHTML = h('t-front', ' Front Panel', 0) + frontPanel() + h('t-conn', ' Connector Pane', 1) + connector() + h('t-diag', ' Block Diagram', 2) + diagram();
  // spread the title letters to the printed width
  sec.querySelectorAll('[data-fit]').forEach(e => { e.style.letterSpacing = ((e.dataset.fit * K - e.getBoundingClientRect().width) / e.textContent.length).toFixed(4) + 'px'; });
});
</script>
</body>
</html>
